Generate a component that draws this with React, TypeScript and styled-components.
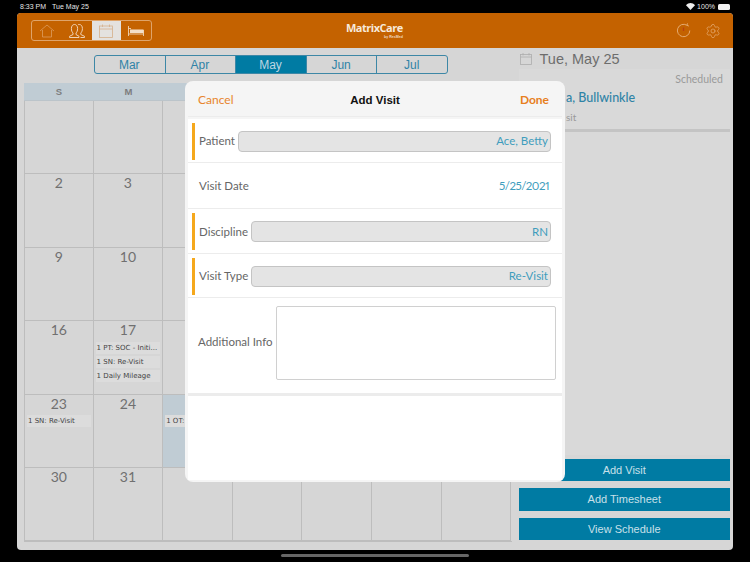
import React from "react";
import styled, { createGlobalStyle } from "styled-components";
import { Settings } from "lucide-react";

const Global = createGlobalStyle`
  html, body { margin: 0; padding: 0; background: #000; }
  * { box-sizing: border-box; }
`;

const Screen = styled.div`
  position: relative;
  width: 750px;
  height: 562px;
  background: #000;
  overflow: hidden;
  font-family: "Liberation Sans", Arial, sans-serif;
  display: flex;
  flex-direction: column;
`;
const StatusBar = styled.div`
  height: 13px;
  padding: 0 20px;
  display: flex;
  align-items: center;
  justify-content: space-between;
  color: #e6e6e6;
  font-size: 7px;
`;
const StatusLeft = styled.div`
  display: flex;
  gap: 6px;
`;
const StatusRight = styled.div`
  display: flex;
  align-items: center;
  gap: 2px;
`;
const Battery = styled.div`
  width: 12px;
  height: 6px;
  margin-left: 1px;
  background: #f2f2f2;
  border-radius: 1.5px;
`;
const AppFrame = styled.div`
  margin: 0 17px;
  width: 716px;
  height: 537px;
  background: #d6d6d6;
  border-radius: 4px;
  overflow: hidden;
  display: flex;
  flex-direction: column;
`;
const Header = styled.header`
  height: 35px;
  flex: none;
  background: #c46200;
  display: flex;
  align-items: center;
  justify-content: space-between;
  padding: 0 12px 0 14px;
  position: relative;
`;
const NavGroup = styled.div`
  display: flex;
  width: 121px;
  height: 21px;
  border: 1px solid #dfa46a;
  border-radius: 3px;
  overflow: hidden;
`;
const NavItem = styled.div<{ $active?: boolean }>`
  flex: 1;
  display: flex;
  align-items: center;
  justify-content: center;
  background: ${(p) => (p.$active ? "#e4e2df" : "transparent")};
  & + & {
    border-left: ${(p) => (p.$active ? "none" : "1px solid #dfa46a")};
  }
`;
const Logo = styled.div`
  position: absolute;
  left: 329px;
  top: 8px;
  width: 57px;
  color: #f7e9da;
  font-family: "Open Sans", sans-serif;
  font-weight: 700;
  font-size: 11px;
  line-height: 14px;
  letter-spacing: -0.5px;
  white-space: nowrap;
`;
const LogoBy = styled.div`
  font-family: "Liberation Sans", sans-serif;
  font-size: 3.6px;
  line-height: 4px;
  font-weight: 700;
  letter-spacing: 0;
  text-align: right;
  color: #edd9c2;
`;
const HeaderTools = styled.div`
  display: flex;
  align-items: center;
  gap: 14px;
  color: #e8b27c;
`;
const Body = styled.div`
  flex: 1;
  display: flex;
  min-height: 0;
`;
const LeftCol = styled.div`
  width: 501.5px;
  flex: none;
  padding: 7px 0 0 7px;
  display: flex;
  flex-direction: column;
`;
const Months = styled.div`
  align-self: flex-start;
  margin-left: 70px;
  width: 354px;
  height: 19px;
  display: flex;
  border: 1px solid #3d87a6;
  border-radius: 3px;
  overflow: hidden;
`;
const Month = styled.div<{ $active?: boolean }>`
  flex: 1;
  font-size: 12px;
  display: flex;
  align-items: center;
  justify-content: center;
  padding-right: 1px;
  color: ${(p) => (p.$active ? "#bcd6e2" : "#2f83a6")};
  background: ${(p) => (p.$active ? "#007ba3" : "transparent")};
  & + & {
    border-left: 1px solid #3d87a6;
  }
`;
const Calendar = styled.div`
  margin-top: 9px;
  width: 488px;
  display: grid;
  grid-template-columns: repeat(7, 69.6px);
  grid-template-rows: 18px repeat(6, 73.4px);
  border-bottom: 1px solid #bdbdbd;
`;
const DayHead = styled.div`
  background: #c0ccd4;
  color: #7d7d7d;
  font-size: 9.5px;
  font-weight: 700;
  display: flex;
  align-items: center;
  justify-content: center;
  border-bottom: 1px solid #bbc4ca;
`;
const Cell = styled.div<{ $selected?: boolean }>`
  background: ${(p) => (p.$selected ? "#c0ccd4" : "transparent")};
  border-right: 1px solid #bdbdbd;
  border-bottom: 1px solid #bdbdbd;
  padding: 0 2px 0;
  display: flex;
  flex-direction: column;
  min-width: 0;
  &:nth-child(7n + 1) {
    border-left: 1px solid #bdbdbd;
  }
`;
const DayNum = styled.div`
  height: 18.5px;
  text-align: center;
  font-family: "Lato", sans-serif;
  font-size: 14px;
  line-height: 18px;
  color: #707070;
`;
const DayNumSpacer = styled.div`
  height: 18.5px;
`;
const Event = styled.div`
  height: 12px;
  margin-top: 2px;
  padding-left: 1px;
  background: #dcdcdc;
  font-family: "DejaVu Sans", sans-serif;
  font-size: 7px;
  line-height: 12px;
  color: #444;
  white-space: nowrap;
  overflow: hidden;
`;
const RightCol = styled.div`
  flex: 1;
  padding-right: 3px;
  display: flex;
  flex-direction: column;
  min-width: 0;
`;
const DateRow = styled.div`
  height: 21px;
  padding-left: 1px;
  display: flex;
  align-items: center;
  gap: 8px;
  color: #6d6d6d;
  font-size: 14.5px;
`;
const VisitCard = styled.div`
  height: 63px;
  background: #d9d9d9;
  padding: 4px 7px 0 0;
  border-bottom: 3px solid #c4c4c4;
  display: flex;
  flex-direction: column;
`;
const Scheduled = styled.div`
  text-align: right;
  font-size: 10.5px;
  color: #9a9a9a;
  font-family: "Lato", sans-serif;
`;
const Patient = styled.div`
  margin-top: 5px;
  padding-left: 47.5px;
  font-family: "Lato", sans-serif;
  font-size: 12.5px;
  font-weight: 500;
  color: #2f83a6;
`;
const VisitKind = styled.div`
  margin-top: 6px;
  font-size: 10px;
  padding-left: 47.5px;
  color: #9a9a9a;
  font-family: "Lato", sans-serif;
`;
const Filler = styled.div`
  flex: 1;
  background: #d9d9d9;
`;
const Actions = styled.div`
  display: flex;
  flex-direction: column;
  gap: 7px;
  padding: 3.5px 0 10px;
`;
const ActionButton = styled.div`
  height: 22.5px;
  background: #007ba3;
  color: #c9e0ea;
  font-size: 11px;
  display: flex;
  align-items: center;
  justify-content: center;
`;
const Modal = styled.div`
  position: absolute;
  left: 185px;
  top: 81px;
  width: 380px;
  height: 401px;
  background: #f5f5f5;
  border-radius: 8px;
  display: flex;
  flex-direction: column;
  padding: 0 3px 2px;
  overflow: hidden;
`;
const ModalNav = styled.div`
  height: 36px;
  margin-bottom: 2px;
  padding: 2px 13px 0 10px;
  display: flex;
  align-items: center;
  justify-content: space-between;
  position: relative;
  font-size: 12px;
  font-family: "Lato", sans-serif;
  color: #e8842c;
  border-bottom: 1px solid #ececec;
`;
const ModalTitle = styled.div`
  position: absolute;
  left: 0;
  right: 0;
  text-align: center;
  font-family: "Liberation Sans", sans-serif;
  font-weight: 700;
  font-size: 11.5px;
  color: #111;
  pointer-events: none;
`;
const DoneLabel = styled.span`
  font-weight: 700;
  color: #e77f1d;
`;
const FormRow = styled.div<{ $h: number }>`
  height: ${(p) => p.$h}px;
  flex: none;
  background: #fff;
  border-bottom: 1px solid #ececec;
  display: flex;
  align-items: center;
  padding: 1px 11px 0 4px;
`;
const RequiredBar = styled.div<{ $on?: boolean }>`
  width: 3px;
  height: 37px;
  flex: none;
  margin-right: 4px;
  background: ${(p) => (p.$on ? "#f5a81c" : "transparent")};
`;
const FieldLabel = styled.div`
  font-family: "Lato", sans-serif;
  font-size: 11.5px;
  color: #666;
  white-space: nowrap;
  margin: 0 3px 1px 0;
`;
const InfoLabel = styled(FieldLabel)`
  margin-bottom: 4px;
`;
const ReadField = styled.div`
  flex: 1;
  height: 21px;
  background: #e4e4e4;
  border: 1px solid #c4c4c4;
  border-radius: 4px;
  display: flex;
  align-items: center;
  justify-content: flex-end;
  padding: 0 2px 1px 0;
  font-family: "Lato", sans-serif;
  font-size: 11.5px;
  color: #3f9dbd;
`;
const DateValue = styled.div`
  flex: 1;
  text-align: right;
  padding: 0 2px 1px 0;
  font-family: "Lato", sans-serif;
  font-size: 11.5px;
  font-variant-numeric: proportional-nums;
  letter-spacing: -0.5px;
  color: #3f9dbd;
`;
const InfoRow = styled.div`
  height: 98px;
  flex: none;
  background: #fff;
  border-bottom: 3px solid #ececec;
  display: flex;
  align-items: center;
  padding: 0 6px 5px 10px;
`;
const InfoBox = styled.div`
  width: 281px;
  height: 74px;
  margin-left: auto;
  border: 1px solid #d0d0d0;
  border-radius: 2px;
  background: #fff;
`;
const ModalRest = styled.div`
  flex: 1;
  background: #fff;
`;
const HomeBar = styled.div`
  position: absolute;
  left: 281px;
  top: 554px;
  width: 188px;
  height: 3px;
  border-radius: 2px;
  background: #666;
`;

const HomeIcon = () => (
  <svg width="16" height="14" viewBox="0 0 16 14" fill="none" stroke="#dd9d60" strokeWidth="0.8">
    <path d="M1 7 8 1l7 6M3.5 6v7h9V6" />
  </svg>
);
const PeopleIcon = () => (
  <svg width="18" height="16" viewBox="0 0 18 16" fill="none" stroke="#efd2b5" strokeWidth="1">
    <path d="M5 10c-1-1-1.6-2.4-1.6-4.400C3.400 3 4.600 1.500 6.500 1.500S9.600 3 9.600 5.600c0 2-.6 3.400-1.600 4.400v1.500l3 1.800v1.200H1.500v-1.200l3.500-1.800z" />
    <path d="M10 1.700c.5-.2.900-.2 1.300-.2 1.900 0 3.100 1.500 3.100 4.100 0 2-.6 3.400-1.600 4.400v1.500l3.700 1.800v1.200h-4" />
  </svg>
);
const CalendarNavIcon = () => (
  <svg width="14" height="14" viewBox="0 0 14 14" fill="none" stroke="#d5b08a" strokeWidth="0.8">
    <rect x="0.500" y="2" width="13" height="11.500" />
    <path d="M.5 5h13M3.500 .5V3M10.500 .5V3" />
  </svg>
);
const BedIcon = () => (
  <svg width="16" height="10" viewBox="0 0 16 10" fill="none" stroke="#f3dfc9" strokeWidth="0.8">
    <path d="M.5 0v10M15.500 4v6M.5 8h15" />
    <rect x="2" y="3.500" width="13.500" height="3.500" fill="#f3dfc9" stroke="none" />
    <path d="M.5 2.500H3" />
  </svg>
);
const RefreshIcon = () => (
  <svg width="15" height="15" viewBox="0 0 15 15" fill="none" stroke="#e8b27c" strokeWidth="0.9">
    <path d="M10.800 2.200A6.200 6.200 0 1 0 13.800 7.500" />
    <path d="M11.500 .4 10.900 2.300 12.900 3.100" />
    <path d="M7.500 4.500v3.500" stroke="#b9400f" strokeWidth="1.300" />
  </svg>
);
const CalendarGrayIcon = () => (
  <svg width="12" height="12" viewBox="0 0 12 12" fill="none" stroke="#adadad" strokeWidth="0.8">
    <rect x="0.500" y="1.500" width="11" height="10" />
    <path d="M.5 4h11M3 0v2.500M9 0v2.500" />
  </svg>
);
const WifiIcon = () => (
  <svg width="9" height="7" viewBox="0 0 9 7" fill="#eee">
    <path d="M4.500 7 0 2.200C2.500-.7 6.500-.7 9 2.200z" />
  </svg>
);

type CellData = { n?: number; events?: string[]; selected?: boolean };

/* Only what the dialog leaves visible is written out. */
const days: CellData[] = [
  {}, {}, {}, {}, {}, {}, {},
  { n: 2 }, { n: 3 }, {}, {}, {}, {}, {},
  { n: 9 }, { n: 10 }, {}, {}, {}, {}, {},
  { n: 16 },
  { n: 17, events: ["1 PT: SOC - Initi...", "1 SN: Re-Visit", "1 Daily Mileage"] },
  {}, {}, {}, {}, {},
  { n: 23, events: ["1 SN: Re-Visit"] },
  { n: 24 },
  { events: ["1 OT:"], selected: true },
  {}, {}, {}, {},
  { n: 30 }, { n: 31 }, {}, {}, {}, {}, {},
];

export default function App() {
  return (
    <Screen>
      <Global />
      <StatusBar>
        <StatusLeft>
          <span>8:33 PM</span>
          <span>Tue May 25</span>
        </StatusLeft>
        <StatusRight>
          <WifiIcon />
          <span>100%</span>
          <Battery />
        </StatusRight>
      </StatusBar>
      <AppFrame>
        <Header>
          <NavGroup>
            <NavItem><HomeIcon /></NavItem>
            <NavItem><PeopleIcon /></NavItem>
            <NavItem $active><CalendarNavIcon /></NavItem>
            <NavItem><BedIcon /></NavItem>
          </NavGroup>
          <Logo>
            MatrixCare
            <LogoBy>by ResMed</LogoBy>
          </Logo>
          <HeaderTools>
            <RefreshIcon />
            <Settings size={16} strokeWidth={1} />
          </HeaderTools>
        </Header>
        <Body>
          <LeftCol>
            <Months>
              <Month>Mar</Month>
              <Month>Apr</Month>
              <Month $active>May</Month>
              <Month>Jun</Month>
              <Month>Jul</Month>
            </Months>
            <Calendar>
              <DayHead>S</DayHead>
              <DayHead>M</DayHead>
              <DayHead />
              <DayHead />
              <DayHead />
              <DayHead />
              <DayHead />
              {days.map((d, i) => (
                <Cell key={i} $selected={d.selected}>
                  {d.n !== undefined ? <DayNum>{d.n}</DayNum> : d.selected ? <DayNumSpacer /> : null}
                  {d.events?.map((e) => <Event key={e}>{e}</Event>)}
                </Cell>
              ))}
            </Calendar>
          </LeftCol>
          <RightCol>
            <DateRow>
              <CalendarGrayIcon />
              Tue, May 25
            </DateRow>
            <VisitCard>
              <Scheduled>Scheduled</Scheduled>
              <Patient>a, Bullwinkle</Patient>
              <VisitKind>sit</VisitKind>
            </VisitCard>
            <Filler />
            <Actions>
              <ActionButton>Add Visit</ActionButton>
              <ActionButton>Add Timesheet</ActionButton>
              <ActionButton>View Schedule</ActionButton>
            </Actions>
          </RightCol>
        </Body>
      </AppFrame>
      <Modal>
        <ModalNav>
          <span>Cancel</span>
          <ModalTitle>Add Visit</ModalTitle>
          <DoneLabel>Done</DoneLabel>
        </ModalNav>
        <FormRow $h={44}>
          <RequiredBar $on />
          <FieldLabel>Patient</FieldLabel>
          <ReadField>Ace, Betty</ReadField>
        </FormRow>
        <FormRow $h={46}>
          <RequiredBar />
          <FieldLabel>Visit Date</FieldLabel>
          <DateValue>5/25/2021</DateValue>
        </FormRow>
        <FormRow $h={45}>
          <RequiredBar $on />
          <FieldLabel>Discipline</FieldLabel>
          <ReadField>RN</ReadField>
        </FormRow>
        <FormRow $h={44}>
          <RequiredBar $on />
          <FieldLabel>Visit Type</FieldLabel>
          <ReadField>Re-Visit</ReadField>
        </FormRow>
        <InfoRow>
          <InfoLabel>Additional Info</InfoLabel>
          <InfoBox />
        </InfoRow>
        <ModalRest />
      </Modal>
      <HomeBar />
    </Screen>
  );
}
